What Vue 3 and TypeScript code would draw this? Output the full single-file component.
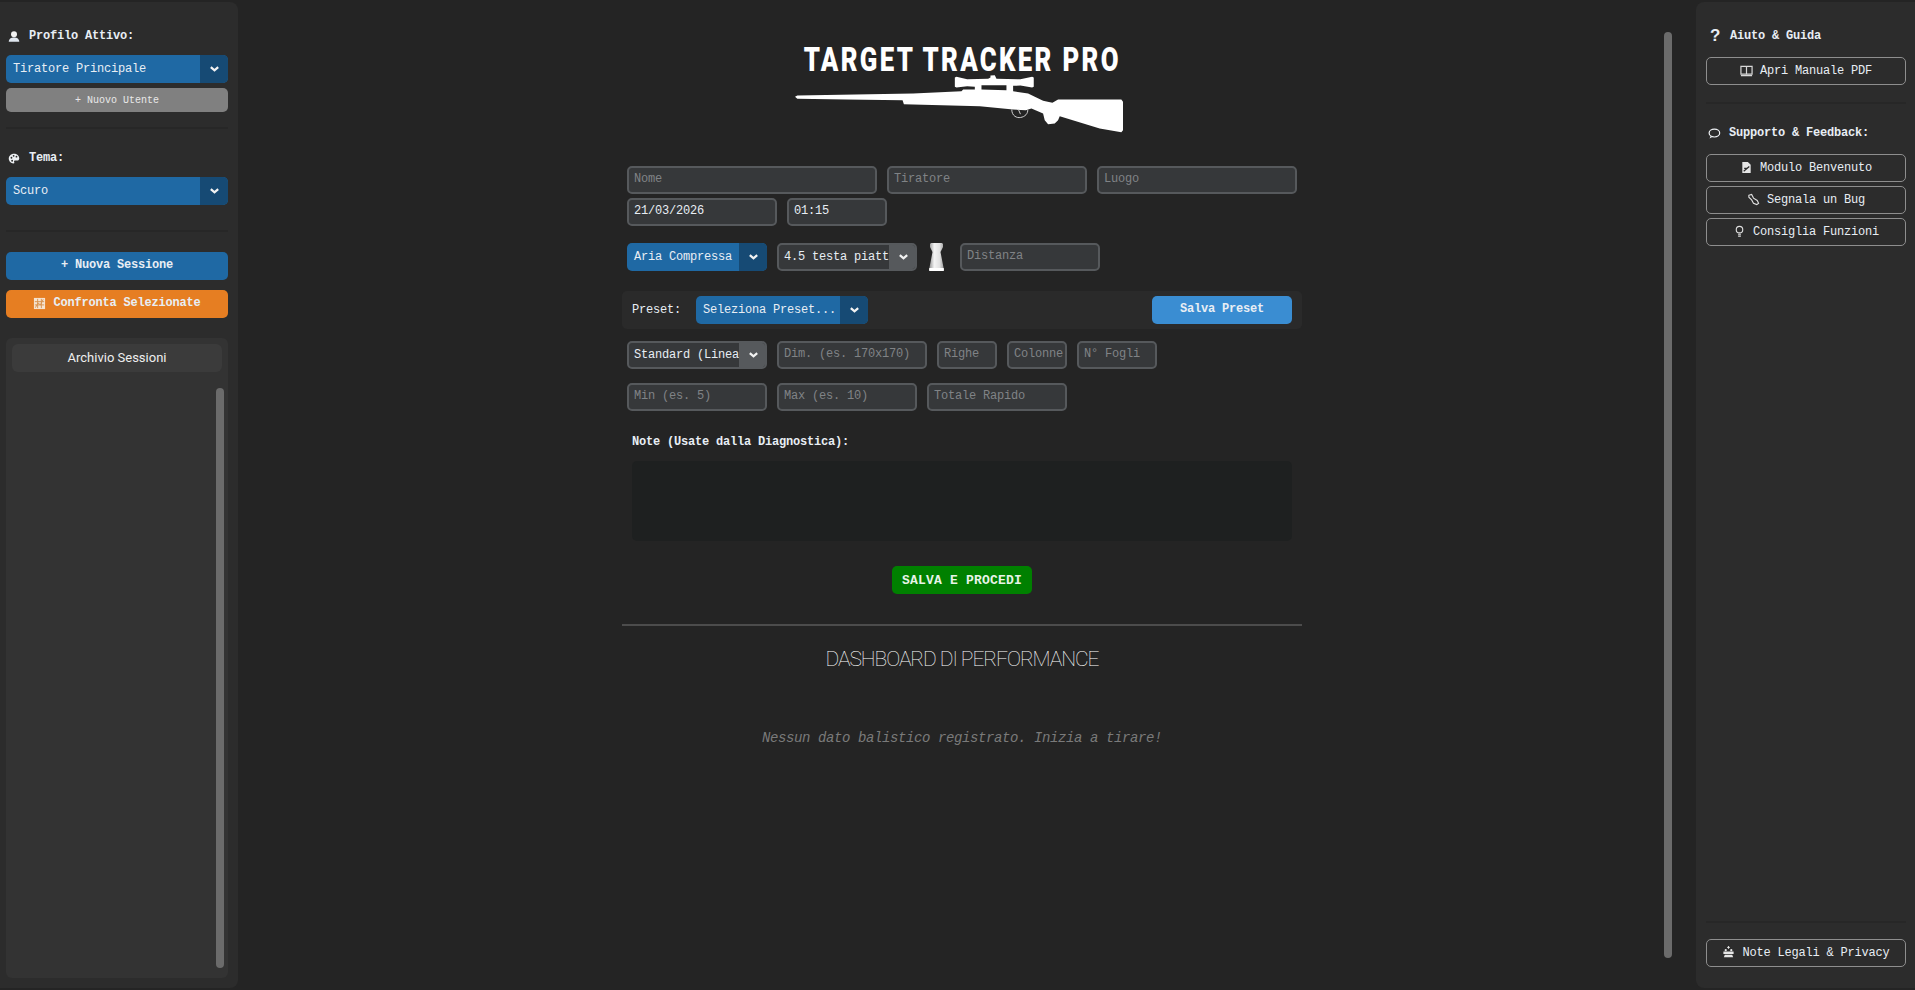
<script setup lang="ts">
const rowOne = [
  { ph: 'Nome', cls: 'w-nome' },
  { ph: 'Tiratore', cls: 'w-tir' },
  { ph: 'Luogo', cls: 'w-tir' }
];
const gridRow = [
  { ph: 'Dim. (es. 170x170)', cls: 'w-dim' },
  { ph: 'Righe', cls: 'w-small' },
  { ph: 'Colonne', cls: 'w-small' },
  { ph: 'N° Fogli', cls: 'w-fogli' }
];
const rangeRow = ['Min (es. 5)', 'Max (es. 10)', 'Totale Rapido'];
const supportLinks = [
  { icon: 'doc', label: 'Modulo Benvenuto' },
  { icon: 'bug', label: 'Segnala un Bug' },
  { icon: 'bulb', label: 'Consiglia Funzioni' }
];
</script>

<template>
  <div class="app">
    <aside class="side side-left">
      <h4 class="side-title">
        <svg class="ico" viewBox="0 0 16 16"><circle cx="8" cy="5" r="4" fill="#f2f2f2" /><path d="M1 15c0-3.600 3-5.600 7-5.600s7 2 7 5.600z" fill="#dfe6ee" /></svg>
        Profilo Attivo:
      </h4>
      <div class="select blue full">
        <span class="select-text">Tiratore Principale</span>
        <span class="select-arrow"><svg viewBox="0 0 12 8"><path d="M2 2l4 3.400L10 2" /></svg></span>
      </div>
      <button class="btn-grey">+ Nuovo Utente</button>
      <hr class="sep sep-a" />
      <h4 class="side-title">
        <svg class="ico" viewBox="0 0 16 16"><path d="M8 1.500C4 1.500 1 4.500 1 8s2.800 6.500 6.200 6.500c1.500 0 1.500-1.300 1-2-.5-1 .2-1.900 1.300-1.900h2.800c1.600 0 2.700-1 2.700-2.700C15 4 11.800 1.500 8 1.500z" fill="#eef1f4" /><circle cx="4.600" cy="7" r="1.200" fill="#2b2b2b" /><circle cx="7.500" cy="4.400" r="1.200" fill="#2b2b2b" /><circle cx="11.300" cy="5.600" r="1.200" fill="#2b2b2b" /><circle cx="5.500" cy="11" r="1.200" fill="#2b2b2b" /></svg>
        Tema:
      </h4>
      <div class="select blue full">
        <span class="select-text">Scuro</span>
        <span class="select-arrow"><svg viewBox="0 0 12 8"><path d="M2 2l4 3.400L10 2" /></svg></span>
      </div>
      <hr class="sep sep-b" />
      <button class="btn-action blue-bg">+ Nuova Sessione</button>
      <button class="btn-action orange-bg">
        <svg class="ico-sm" viewBox="0 0 14 14"><rect x="1" y="1" width="12" height="12" fill="#f6e3cf" /><path d="M2.500 11.500l3-5 2.500 2 3-6M2 5h10M2 8.500h10M5 2v10M9 2v10" fill="none" stroke="#d8924e" stroke-width="1" /></svg>
        Confronta Selezionate
      </button>
      <div class="archive">
        <div class="archive-head">Archivio Sessioni</div>
        <div class="archive-body"><span class="thumb"></span></div>
      </div>
    </aside>

    <main class="main">
      <div class="main-inner">
        <div class="logo">
          <div class="logo-text">TARGET TRACKER PRO</div>
          <svg class="rifle" viewBox="45 135 985 173">
            <path fill="#fff" d="M45 200 L52 196 L400 190 L545 183 L550 178 L585 178 L585 170 L562 168 L530 172 L525 170 L525 142 L530 140 L562 147 L625 146 L632 142 L632 136 L645 135 L650 146 L722 147 L757 140 L762 142 L762 170 L757 172 L722 166 L700 167 L700 183 L745 190 L790 212 L818 218 L835 208 L1025 208 L1030 215 L1030 300 L1025 306 L960 295 L840 258 L835 270 L825 280 L805 282 L795 270 L790 250 L755 235 L738 240 L700 238 L600 228 L372 222 L368 210 L200 208 L52 206 Z" />
            <path fill="#232323" d="M605 165 L680 165 L680 180 L605 178 Z" />
            <path d="M696 238 C696 258 712 264 722 262 C736 260 745 250 744 238" fill="none" stroke="#d0d0d0" stroke-width="3" />
            <path d="M716 238 L722 252" stroke="#d0d0d0" stroke-width="3" />
          </svg>
        </div>

        <div class="row">
          <div v-for="f in rowOne" :key="f.ph" class="input" :class="f.cls"><span class="ph">{{ f.ph }}</span></div>
        </div>
        <div class="row row-date">
          <div class="input w-date"><span class="val">21/03/2026</span></div>
          <div class="input w-time"><span class="val">01:15</span></div>
        </div>

        <div class="row row-ammo">
          <div class="select blue w-std">
            <span class="select-text">Aria Compressa</span>
            <span class="select-arrow"><svg viewBox="0 0 12 8"><path d="M2 2l4 3.400L10 2" /></svg></span>
          </div>
          <div class="select dark w-std">
            <span class="select-text">4.5 testa piatta</span>
            <span class="select-arrow"><svg viewBox="0 0 12 8"><path d="M2 2l4 3.400L10 2" /></svg></span>
          </div>
          <svg class="pellet" viewBox="0 0 17 28">
            <defs>
              <linearGradient id="pelletFill" x1="0" x2="1" y1="0" y2="0">
                <stop offset="0" stop-color="#8f8f8f" /><stop offset=".35" stop-color="#f4f4f4" /><stop offset=".7" stop-color="#e2e2e2" /><stop offset="1" stop-color="#9c9c9c" />
              </linearGradient>
            </defs>
            <path fill="url(#pelletFill)" d="M2 1l1-1h11l1 1v3l-2.500 5 3 15.500.5 3-1 .5H2l-1-.5.500-3 3-15.500L2 4z" />
            <path fill="#fff" d="M1.300 25h14.400l.3 2.500-1 .5H2l-1-.5z" />
          </svg>
          <div class="input w-dist"><span class="ph">Distanza</span></div>
        </div>

        <div class="preset-bar">
          <span class="preset-label">Preset:</span>
          <div class="select blue w-preset">
            <span class="select-text">Seleziona Preset...</span>
            <span class="select-arrow"><svg viewBox="0 0 12 8"><path d="M2 2l4 3.400L10 2" /></svg></span>
          </div>
          <button class="btn-preset">Salva Preset</button>
        </div>

        <div class="row row-grid">
          <div class="select dark w-std">
            <span class="select-text">Standard (Lineare)</span>
            <span class="select-arrow"><svg viewBox="0 0 12 8"><path d="M2 2l4 3.400L10 2" /></svg></span>
          </div>
          <div v-for="f in gridRow" :key="f.ph" class="input" :class="f.cls"><span class="ph">{{ f.ph }}</span></div>
        </div>
        <div class="row row-range">
          <div v-for="p in rangeRow" :key="p" class="input w-std"><span class="ph">{{ p }}</span></div>
        </div>

        <label class="note-label">Note (Usate dalla Diagnostica):</label>
        <div class="note-area"></div>
        <div class="save-wrap"><button class="btn-save">SALVA E PROCEDI</button></div>
        <hr class="main-sep" />
        <h2 class="dash-title">DASHBOARD DI PERFORMANCE</h2>
        <p class="empty">Nessun dato balistico registrato. Inizia a tirare!</p>
      </div>
      <span class="main-thumb"></span>
    </main>

    <aside class="side side-right">
      <h4 class="side-title">
        <span class="q">?</span>
        Aiuto &amp; Guida
      </h4>
      <button class="btn-outline">
        <svg class="ico-sm" viewBox="0 0 14 14"><path d="M1 2.500h5.500l.5 1 .5-1H13v8.500H1z" fill="none" stroke="#d8d8d8" stroke-width="1.300" /><path d="M7 3.500V11M1 12.500h12" stroke="#d8d8d8" stroke-width="1.300" /></svg>
        Apri Manuale PDF
      </button>
      <hr class="sep sep-c" />
      <h4 class="side-title">
        <svg class="ico" viewBox="0 0 16 16"><ellipse cx="8.500" cy="7.500" rx="6.500" ry="4.800" fill="none" stroke="#eef1f4" stroke-width="1.500" /><path d="M4 11L2.500 14l4-2" fill="#eef1f4" /></svg>
        Supporto &amp; Feedback:
      </h4>
      <button v-for="l in supportLinks" :key="l.label" class="btn-outline stack">
        <svg v-if="l.icon === 'doc'" class="ico-sm" viewBox="0 0 14 14"><path d="M2.500 1h6l3 3v9h-9z" fill="#e6e6e6" /><path d="M4 11l6-5M4.500 8h3" stroke="#2b2b2b" stroke-width="1.300" /></svg>
        <svg v-else-if="l.icon === 'bug'" class="ico-sm" viewBox="0 0 14 14"><path d="M2 2.500l3-1 2 4 4 2.500 1.500 3-2 1.500-3.500-1.500-2-3.500-3-3z" fill="none" stroke="#e0e0e0" stroke-width="1.200" /></svg>
        <svg v-else class="ico-sm" viewBox="0 0 14 14"><circle cx="7" cy="5" r="3.500" fill="none" stroke="#e0e0e0" stroke-width="1.200" /><path d="M5.500 10h3M5.500 12h3" stroke="#e0e0e0" stroke-width="1.200" /></svg>
        {{ l.label }}
      </button>
      <div class="grow"></div>
      <hr class="sep sep-d" />
      <button class="btn-outline">
        <svg class="ico-sm" viewBox="0 0 14 14"><path d="M7 0v3M5.500 1.500h3" stroke="#e6e6e6" stroke-width="1" /><path d="M1.500 6h11v2.500h-11zM3 9.500h8l1 2.500H2z" fill="#e6e6e6" /><circle cx="4" cy="4.500" r="1.200" fill="#e6e6e6" /><circle cx="10" cy="4.500" r="1.200" fill="#e6e6e6" /></svg>
        Note Legali &amp; Privacy
      </button>
    </aside>
  </div>
</template>

<style>
html, body {
  margin: 0;
  height: 100%;
  background: #232323;
  overflow: hidden;
}
</style>

<style scoped>
* { box-sizing: border-box; }

.app {
  display: flex;
  justify-content: space-between;
  height: 990px;
  padding-top: 2px;
  background: #242424;
  font-family: "Liberation Mono", "Courier New", monospace;
  color: #e8eef4;
  letter-spacing: -0.2px;
}

.side {
  flex: none;
  display: flex;
  flex-direction: column;
  background: #2c2c2c;
  height: 986px;
}
.side-left {
  width: 238px;
  padding: 25px 10px 10px 6px;
  border-radius: 0 8px 8px 0;
}
.side-right {
  width: 219px;
  padding: 25px 9px 21px 10px;
  border-radius: 8px 0 0 8px;
}

.side-title {
  display: flex;
  align-items: center;
  gap: 9px;
  margin: 0 0 12px;
  height: 16px;
  padding-top: 2px;
  font-size: 12px;
  font-weight: 700;
  flex: none;
}
.side-right .side-title { margin-bottom: 14px; gap: 8px; }
.ico { width: 12px; height: 13px; margin-left: 2px; flex: none; }
.side-right .ico { width: 14px; margin-left: 1px; }
.ico-sm { width: 13px; height: 13px; flex: none; }
.q { width: 14px; margin-left: 2px; text-align: center; font-size: 17px; font-weight: 700; font-family: "Liberation Sans", sans-serif; }

.select {
  display: flex;
  height: 28px;
  border-radius: 5px;
  overflow: hidden;
  font-size: 12px;
  color: #e8eef4;
  flex: none;
}
.select-text {
  flex: 1;
  min-width: 0;
  padding: 7px 2px 0 7px;
  white-space: nowrap;
  overflow: hidden;
  line-height: 14px;
}
.select-arrow {
  flex: none;
  width: 28px;
  display: flex;
  align-items: center;
  justify-content: center;
}
.select-arrow svg { width: 11px; height: 8px; fill: none; stroke: #f2f2f2; stroke-width: 2.500; }
.blue { background: #1f69a4; }
.blue .select-arrow { background: #164a74; }
.dark { background: #36383a; border: 2px solid #56595c; }
.dark .select-text { padding: 5px 0 0 5px; margin-right: 2px; }
.dark .select-arrow { background: #56595c; margin: -2px; width: 28px; }
.full { width: 222px; }

.btn-grey {
  width: 222px;
  height: 24px;
  margin-top: 5px;
  flex: none;
  border: 0;
  border-radius: 5px;
  background: #808080;
  color: #e8e8e8;
  font-family: inherit;
  font-size: 10px;
  letter-spacing: 0;
}
.sep { width: 100%; height: 2px; border: 0; background: #272727; margin: 0; flex: none; }
.sep-a { margin: 15px 0 20px; width: 222px; }
.sep-b { margin: 25px 0 20px; width: 222px; }
.sep-c { margin: 17px 0 20px; }
.sep-d { margin-bottom: 16px; }

.btn-action {
  display: flex;
  align-items: center;
  justify-content: center;
  gap: 7px;
  width: 222px;
  height: 28px;
  border: 0;
  border-radius: 5px;
  padding-bottom: 3px;
  color: #e8eef4;
  font-family: inherit;
  font-size: 12px;
  font-weight: 700;
  letter-spacing: inherit;
  flex: none;
  margin-bottom: 10px;
}
.blue-bg { background: #1f69a4; }
.orange-bg { background: #e67e22; }

.archive {
  flex: 1;
  width: 222px;
  margin-top: 10px;
  display: flex;
  flex-direction: column;
  background: #333;
  border-radius: 6px;
  padding: 6px;
  min-height: 0;
}
.archive-head {
  height: 28px;
  flex: none;
  border-radius: 6px;
  background: #3b3b3b;
  color: #eee;
  font-family: Roboto, sans-serif;
  font-size: 13px;
  letter-spacing: 0;
  line-height: 28px;
  text-align: center;
}
.archive-body {
  flex: 1;
  display: flex;
  justify-content: flex-end;
  padding: 16px 0 4px;
  margin-right: -2px;
}
.thumb {
  width: 8px;
  background: #6b6b6b;
  border-radius: 4px;
}

.main {
  flex: 1;
  position: relative;
  display: flex;
  justify-content: center;
  min-width: 0;
}
.main-inner {
  width: 680px;
  margin-right: 10px;
}
.main-thumb {
  position: absolute;
  right: 24px;
  top: 30px;
  width: 8px;
  height: 926px;
  border-radius: 4px;
  background: #6b6b6b;
}

.logo {
  height: 164px;
  padding-top: 45px;
  display: flex;
  flex-direction: column;
  align-items: center;
}
.logo-text {
  font-family: Roboto, sans-serif;
  font-size: 33px;
  line-height: 26px;
  height: 26px;
  font-weight: 900;
  color: #fff;
  letter-spacing: 3px;
  white-space: nowrap;
  transform: scaleX(.78);
}
.rifle { width: 328px; height: 58px; margin: 2px 0 0 -6px; flex: none; }

.row { display: flex; gap: 10px; padding-left: 5px; }
.input {
  height: 28px;
  flex: none;
  padding: 4px 5px 0;
  background: #36383a;
  border: 2px solid #56595c;
  border-radius: 5px;
  font-size: 12px;
  line-height: 14px;
  white-space: nowrap;
  overflow: hidden;
}
.ph { color: #808386; }
.val { color: #e8eef4; }
.w-nome { width: 250px; }
.w-tir { width: 200px; }
.w-date { width: 150px; }
.w-time { width: 100px; }
.w-std { width: 140px; flex: none; }
.w-dim { width: 150px; }
.w-small { width: 60px; }
.w-fogli { width: 80px; }
.w-dist { width: 140px; }
.w-preset { width: 172px; flex: none; }

.row-date { margin-top: 4px; }
.row-ammo { margin-top: 17px; align-items: center; }
.pellet { width: 17px; height: 28px; margin: 0 5px 0 1px; flex: none; }

.preset-bar {
  display: flex;
  align-items: center;
  gap: 15px;
  height: 38px;
  margin-top: 20px;
  padding: 0 10px;
  background: #2a2a2a;
  border-radius: 5px;
  font-size: 12px;
}
.btn-preset {
  margin-left: auto;
  width: 140px;
  height: 28px;
  border: 0;
  border-radius: 5px;
  padding-bottom: 3px;
  background: #3a8dd2;
  color: #e8eef4;
  font-family: inherit;
  font-size: 12px;
  font-weight: 700;
  letter-spacing: inherit;
}
.row-grid { margin-top: 12px; }
.row-range { margin-top: 14px; }

.note-label {
  display: block;
  margin: 24px 0 0 10px;
  font-size: 12px;
  font-weight: 700;
  line-height: 14px;
}
.note-area {
  margin: 12px 10px 0;
  height: 80px;
  background: #1e2020;
  border-radius: 5px;
}
.save-wrap { display: flex; justify-content: center; margin-top: 25px; }
.btn-save {
  width: 140px;
  height: 28px;
  border: 0;
  border-radius: 5px;
  background: #008000;
  color: #e8f4e8;
  font-family: inherit;
  font-size: 13px;
  font-weight: 700;
  letter-spacing: 0.2px;
}
.main-sep {
  height: 2px;
  border: 0;
  background: #4c4c4c;
  margin: 30px 0 0;
}
.dash-title {
  margin: 22px 0 0;
  text-align: center;
  font-family: Roboto, sans-serif;
  font-weight: 100;
  font-size: 21px;
  line-height: 22px;
  letter-spacing: -1.050px;
  color: #fff;
}
.empty {
  margin: 60px 0 0;
  text-align: center;
  font-size: 14px;
  line-height: 16px;
  font-style: italic;
  letter-spacing: -0.4px;
  color: #7a7a7a;
}

.btn-outline {
  display: flex;
  align-items: center;
  justify-content: center;
  gap: 7px;
  width: 100%;
  height: 28px;
  flex: none;
  border: 1px solid #8e8e8e;
  border-radius: 5px;
  padding-bottom: 2px;
  background: transparent;
  color: #e8eef4;
  font-family: inherit;
  font-size: 12px;
  letter-spacing: inherit;
}
.stack { margin-bottom: 4px; }
.grow { flex: 1; }
</style>
